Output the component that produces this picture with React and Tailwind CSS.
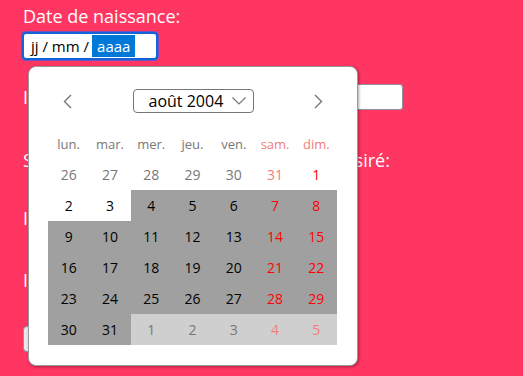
import React from "react";

const F = { fontFamily: '"Open Sans", "Noto Sans", sans-serif' };

function Chevron({ dir }) {
  return (
    <svg width="9" height="15" viewBox="0 0 9 15" className="block">
      {dir === "left" ? (
        <path d="M8 1 L1.5 7.5 L8 14" fill="none" stroke="#777" strokeWidth="1.4" />
      ) : (
        <path d="M1 1 L7.5 7.5 L1 14" fill="none" stroke="#777" strokeWidth="1.4" />
      )}
    </svg>
  );
}

const weekdays = ["lun.", "mar.", "mer.", "jeu.", "ven.", "sam.", "dim."];

const cells = [];
[26, 27, 28, 29, 30, 31].forEach((d) => cells.push({ d, t: "p" }));
for (let d = 1; d <= 31; d++) cells.push({ d, t: "c" });
[1, 2, 3, 4, 5].forEach((d) => cells.push({ d, t: "n" }));

function cellClass(i, c) {
  const col = i % 7;
  const weekend = col >= 5;
  let bg = "bg-white";
  if (c.t === "c" && i >= 9) bg = "bg-[#a0a0a0]";
  if (c.t === "n") bg = "bg-[#cfcfcf]";
  let color;
  if (c.t === "p" || c.t === "n") color = weekend ? "text-[#f47c7c]" : "text-[#777]";
  else color = weekend ? "text-[#f00]" : "text-black";
  return `${bg} ${color} h-[31px] flex items-center justify-center text-[14px]`;
}

export default function App() {
  return (
    <div className="relative w-[523px] h-[376px] bg-[#ff3562] overflow-hidden text-white" style={F}>
      <div className="flex flex-col items-start pl-[23px] pt-[4px]">
        <div className="text-[18px] leading-[24px]">Date de naissance:</div>
        <div className="mt-[4px] ml-[-1px] w-[136px] h-[28px] bg-white border-2 border-[#1463d8] rounded-[4px] shadow-[0_0_0_1px_#6c53c4] flex items-center pl-[7px] text-[15px] text-black">
          <span>jj / mm /</span>
          <span className="ml-[3px] px-[5px] bg-[#0078d7] text-white leading-[22px]">aaaa</span>
        </div>
        <div className="mt-[24px] flex items-center gap-[6px]">
          <span className="text-[18px] leading-[24px]">Identifiant utilisateur:</span>
          <div className="w-[194px] h-[26px] bg-white border border-[#8f8f9d] rounded-[3px]" />
        </div>
        <div className="mt-[38px] text-[18px] leading-[24px] whitespace-nowrap">Saisissez ici le pseudo de l'utilisateur désiré:</div>
        <div className="mt-[34px] text-[18px] leading-[24px]">Identifiant de parrainage:</div>
        <div className="mt-[38px] text-[18px] leading-[24px]">Informations complémentaires:</div>
        <div className="mt-[34px] h-[26px] px-[10px] bg-[#e9e9ed] border border-[#8f8f9d] rounded-[4px] text-black text-[14px] flex items-center">Envoyer</div>
      </div>

      <div className="absolute left-[28px] top-[66px] w-[330px] h-[300px] bg-white border border-[#9b9b9b] rounded-[8px] shadow-[1px_1px_3px_rgba(0,0,0,0.35)] flex flex-col">
        <div className="mt-[22px] px-[34px] flex items-center justify-between h-[24px]">
          <Chevron dir="left" />
          <div className="w-[121px] h-[24px] border border-[#767676] rounded-[4px] flex items-center justify-between pl-[15px] pr-[7px] text-[16px] text-black">
            <span className="leading-[20px]">août 2004</span>
            <svg width="14" height="8" viewBox="0 0 14 8" className="block">
              <path d="M0.5 0.5 L7 7 L13.5 0.5" fill="none" stroke="#777" strokeWidth="1.2" />
            </svg>
          </div>
          <Chevron dir="right" />
        </div>
        <div className="mt-[17px] ml-[19px] w-[289px] grid grid-cols-7">
          {weekdays.map((w, i) => (
            <div
              key={w}
              className={`h-[29px] flex items-center justify-center text-[13px] ${i >= 5 ? "text-[#f47c7c]" : "text-[#777]"}`}
            >
              {w}
            </div>
          ))}
          {cells.map((c, i) => (
            <div key={i} className={cellClass(i, c)}>
              {c.d}
            </div>
          ))}
        </div>
      </div>
    </div>
  );
}
